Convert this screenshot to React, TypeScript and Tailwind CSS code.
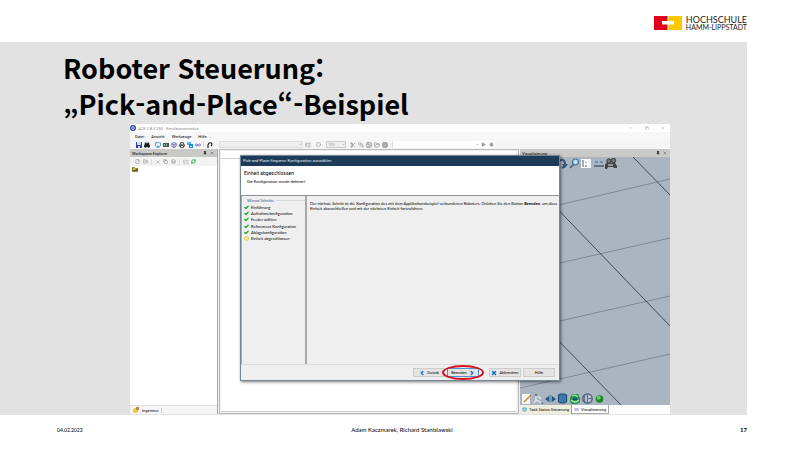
import type { ReactNode } from "react";
import {
  Binoculars, Box, Check, ChevronLeft, ChevronRight, Circle, Copy, Cpu, Cylinder, FolderOpen,
  Image, Layers, ListTree, Minus, Monitor, Pin, Play, Printer, RefreshCw,
  Scissors, X, File, Ruler, Bug, ChevronDown, Infinity as Loop,
} from "lucide-react";

const ui = "font-[Roboto,'Liberation_Sans',sans-serif]";

function Tool({ label, children }: { label: string; children: ReactNode }) {
  return (
    <button type="button" aria-label={label} className="flex size-[7px] shrink-0 items-center justify-center">
      {children}
    </button>
  );
}

function Logo() {
  return (
    <div className="flex items-center gap-1">
      <svg viewBox="0 0 28 14" className="h-[14px] w-[28px]" aria-hidden="true">
        <path d="M0 0H13.500V5H8V8.500H13.500V14H0Z" fill="#e2001a" />
        <path d="M14.500 0H28V14H14.500V8.500H20V5H14.500Z" fill="#fcc800" />
      </svg>
      <div className="font-[Lato,sans-serif] text-[#222]">
        <div className="text-[9px] leading-[9px]">HOCHSCHULE</div>
        <div className="text-[7px] leading-[7px]">HAMM-LIPPSTADT</div>
      </div>
    </div>
  );
}

function WindowBar() {
  return (
    <div className="flex h-2 items-center gap-[2px] pr-1 text-[#888]">
      <svg viewBox="0 0 6 6" className="size-[6px]" aria-hidden="true">
        <circle cx="3" cy="3" r="3" fill="#324b98" />
        <circle cx="3" cy="3" r="1.300" fill="none" stroke="#dce6ff" strokeWidth=".8" />
      </svg>
      <span className="flex-1">ACE 3.8.3.250 - Emulationsmodus</span>
      <div className="flex gap-[9px]">
        <Tool label="Minimieren"><Minus size={4} /></Tool>
        <Tool label="Wiederherstellen"><Copy size={4} /></Tool>
        <Tool label="Schließen"><X size={4} /></Tool>
      </div>
    </div>
  );
}

function MenuBar() {
  return (
    <nav className="flex h-2 items-center gap-[7px] bg-[#f7f7f7] px-[5px] text-black">
      {["Datei", "Ansicht", "Werkzeuge", "Hilfe"].map((m) => (
        <button type="button" key={m}>{m}</button>
      ))}
    </nav>
  );
}

function Toolbar() {
  return (
    <div className="flex h-[9px] items-center bg-[#f5f5f5] pl-[5px] text-[#9b9b9b]">
      <div className="flex w-[84px] shrink-0 items-center gap-[1px]">
        <Tool label="Speichern">
          <svg viewBox="0 0 6 6" className="size-[6px]" aria-hidden="true"><path d="M0 0H6V6H0Z" fill="#343c9c" /><path d="M1 0H5V3H1ZM2 4H4V6H2Z" fill="#d5d9f3" /></svg>
        </Tool>
        <Tool label="Suchen"><Binoculars size={6} strokeWidth={3} color="#111" fill="#222" /></Tool>
        <span className="w-[2px]" />
        <Tool label="Netzwerk"><Monitor size={6} strokeWidth={3} color="#448bb8" /></Tool>
        <Tool label="Steuerung">
          <svg viewBox="0 0 6 6" className="size-[6px]" aria-hidden="true"><path d="M0 1H6V5H0Z" fill="#4b5a58" /><path d="M1 2H2V4H1ZM3 2H4V4H3Z" fill="#a4b9ae" /></svg>
        </Tool>
        <Tool label="Objekt"><Box size={6} strokeWidth={3} color="#4550a0" /></Tool>
        <Tool label="Drucken"><Printer size={6} strokeWidth={3} color="#333" /></Tool>
        <Tool label="Fenster">
          <svg viewBox="0 0 6 6" className="size-[6px]" aria-hidden="true"><path d="M0 0H4V3H0Z" fill="#55baf0" /><path d="M2 2H6V6H2Z" fill="#188acf" /><path d="M3 4H5V5H3Z" fill="#d9f2ff" /></svg>
        </Tool>
        <Tool label="3D"><Loop size={6} strokeWidth={3} color="#5555d0" /></Tool>
        <span className="mx-[1px] h-[7px] w-px bg-[#ddd]" />
        <Tool label="Zurücksetzen">
          <svg viewBox="0 0 6 6" className="size-[6px]" aria-hidden="true"><path d="M1 6V3Q2 0 4 1Q6 2 4 4" fill="none" stroke="#222" strokeWidth="1.200" /></svg>
        </Tool>
      </div>
      <label className="flex h-[7px] w-[84px] shrink-0 items-center bg-[#eee]">
        <select aria-label="Modul" className="h-[7px] w-full appearance-none border border-[#ddd] bg-[#eee]" />
        <ChevronDown size={3} strokeWidth={5} className="-ml-1" />
      </label>
      <div className="flex items-center gap-[4px] pl-[1px]">
        <Tool label="Verbinden"><ListTree size={6} strokeWidth={3} /></Tool>
        <Tool label="Zustand"><Circle size={5} strokeWidth={3} /></Tool>
        <label className="flex items-center">
          <select aria-label="Zoom" className={`h-[7px] w-5 appearance-none border border-[#ccc] bg-[#eee] pl-px text-[4px] leading-[5px] ${ui}`}>
            <option>100</option>
          </select>
          <ChevronDown size={3} strokeWidth={5} className="-ml-1" />
        </label>
        <div className="flex gap-[1px]">
          <Tool label="Gehe zu"><Scissors size={6} strokeWidth={3} /></Tool>
          <Tool label="Maßstab"><Ruler size={6} strokeWidth={3} /></Tool>
          <Tool label="Bild"><Image size={6} strokeWidth={4} /></Tool>
          <Tool label="Ordner"><FolderOpen size={6} strokeWidth={3} /></Tool>
          <Tool label="Raster"><Cpu size={6} strokeWidth={4} /></Tool>
        </div>
      </div>
      <div className="ml-1 flex h-[7px] w-[87px] items-center justify-end border-l border-[#ddd] bg-white">
        <ChevronDown size={3} strokeWidth={5} />
      </div>
      <div className="flex gap-[1px] bg-white pl-px">
        <Tool label="Starten"><Play size={5} fill="#999" /></Tool>
        <Tool label="Debuggen"><Bug size={5} fill="#999" /></Tool>
      </div>
    </div>
  );
}

function PanelTitle({ children }: { children: ReactNode }) {
  return (
    <div className="flex h-2 items-center justify-between bg-[#c9c9c7] px-[2px] text-black">
      <span>{children}</span>
      <div className="flex">
        <Tool label="Anheften"><Pin size={4} fill="#222" color="#222" /></Tool>
        <Tool label="Schließen"><X size={4} color="#222" /></Tool>
      </div>
    </div>
  );
}

function Explorer() {
  return (
    <section className="flex w-[88px] shrink-0 flex-col border-r border-[#aaa] bg-white">
      <PanelTitle>Workspace Explorer</PanelTitle>
      <div className="flex h-[9px] items-center gap-[1px] bg-[#f3f3f3] pl-1 text-[#999]">
        <Tool label="Neu"><File size={5} strokeWidth={3} /></Tool>
        <Tool label="Öffnen"><FolderOpen size={5} strokeWidth={3} /></Tool>
        <span className="mx-px h-[6px] w-px bg-[#ddd]" />
        <Tool label="Löschen"><X size={6} /></Tool>
        <Tool label="Kopieren"><Copy size={5} strokeWidth={3} /></Tool>
        <Tool label="Einfügen"><Layers size={5} strokeWidth={3} /></Tool>
        <span className="mx-px h-[6px] w-px bg-[#ddd]" />
        <Tool label="Struktur"><ListTree size={6} /></Tool>
        <Tool label="Aktualisieren"><RefreshCw size={5} color="#37ad48" strokeWidth={4} /></Tool>
      </div>
      <div className="flex-1 pt-px pl-[2px]">
        <svg viewBox="0 0 7 5" className="h-[5px] w-[6px]" aria-hidden="true">
          <path d="M0 0H3L4 1H7V5H0Z" fill="#685e16" />
          <path d="M1 1H4V3H1Z" fill="#e8dd47" />
        </svg>
      </div>
      <div className="flex h-[9px] items-center gap-[3px] border-t border-[#ddd] bg-[#f5f5f5] pl-[3px] text-black">
        <svg viewBox="0 0 6 6" className="size-[6px]" aria-hidden="true">
          <circle cx="2.500" cy="3.500" r="2.500" fill="#f3c82c" />
          <path d="M3 0H6V3H3Z" fill="#b18b55" />
        </svg>
        <button type="button" className="border-r border-[#ccc] pr-[2px]">Ingenieur</button>
      </div>
    </section>
  );
}

function Visualization() {
  return (
    <section className="flex w-[150px] shrink-0 flex-col">
      <PanelTitle>Visualisierung</PanelTitle>
      <div className="relative flex-1 bg-[#abb5c2]">
        <svg viewBox="0 0 150 248" preserveAspectRatio="none" className="absolute inset-0 size-full" aria-hidden="true">
          <g stroke="#737e8a" strokeWidth=".8">
            <path d="M0 57L150 22M0 115L150 81M0 173L150 139M0 231L150 197" />
          </g>
          <g stroke="#27313b" strokeWidth=".8">
            <path d="M113 0L150 38M0 13L150 169M0 144L101 248" />
          </g>
        </svg>
        <div className="relative flex h-full flex-col justify-between">
          <div className="flex items-center gap-px pt-px pl-[37px]">
            <button type="button" aria-label="Drehen">
              <svg viewBox="0 0 11 11" className="size-[11px]" aria-hidden="true"><path d="M1 4Q6 -1 8 5Q9 8 5 10" fill="none" stroke="#34566f" strokeWidth="2" /><path d="M5 6H11L8 10Z" fill="#34566f" /></svg>
            </button>
            <button type="button" aria-label="Zoomen">
              <svg viewBox="0 0 11 11" className="size-[11px]" aria-hidden="true"><path d="M5 6L1 10" stroke="#42617b" strokeWidth="1.600" /><circle cx="6.500" cy="4" r="3" fill="#c4dcea" stroke="#3f6f9b" strokeWidth="1.200" /></svg>
            </button>
            <button type="button" aria-label="Ansicht" className="h-[9px] w-[10px] bg-white">
              <svg viewBox="0 0 10 9" aria-hidden="true"><path d="M2 1V8M5 3V4M5 6V8" stroke="#555" /><path d="M7 0H10V9H7Z" fill="#f0f4f7" /></svg>
            </button>
            <span className="w-px" />
            <button type="button" aria-label="Messen">
              <svg viewBox="0 0 10 10" className="size-[10px]" aria-hidden="true"><path d="M1 3H4M6 3H9" stroke="#2c71a2" /><path d="M0 6H10V8H0Z" fill="#65747c" /></svg>
            </button>
            <button type="button" aria-label="Aufnehmen">
              <svg viewBox="0 0 12 11" className="h-[11px] w-[12px]" aria-hidden="true"><circle cx="4" cy="3" r="2.200" fill="#76797b" stroke="#333" /><circle cx="8.500" cy="2.500" r="2.200" fill="#76797b" stroke="#333" /><path d="M1 5H10L12 8V10H9L8 9H3L2 11H0V7Z" fill="#444" /><path d="M3 6H8V8H3Z" fill="#999" /></svg>
            </button>
          </div>
          <div className="flex items-center gap-px pb-px pl-[2px]">
            <button type="button" aria-label="Bearbeiten">
              <svg viewBox="0 0 10 10" className="size-[10px]" aria-hidden="true"><path d="M0 0H8V10H0Z" fill="#f8f8f4" /><path d="M2 8L9 1" stroke="#c28d30" strokeWidth="1.500" /></svg>
            </button>
            <button type="button" aria-label="Achsen">
              <svg viewBox="0 0 11 10" className="h-[10px] w-[11px]" aria-hidden="true"><path d="M3 1V6L9 9M3 6L1 9M5 2L8 5" fill="none" stroke="#e5eaf0" strokeWidth="1.300" /><path d="M2 2L3 0L4 2M8 10H10L9 8" stroke="#526779" fill="none" /></svg>
            </button>
            <button type="button" aria-label="Verschieben">
              <svg viewBox="0 0 11 9" className="h-[9px] w-[11px]" aria-hidden="true"><path d="M0 5L4 2V4H7V2L11 5L7 8V6H4V8Z" fill="#245783" /><path d="M4 1H7V8H4Z" fill="#7697ae" /></svg>
            </button>
            <button type="button" aria-label="Zylinder"><Cylinder size={11} color="#123c60" fill="#3b79a7" /></button>
            <button type="button" aria-label="Wiederholen">
              <svg viewBox="0 0 12 11" className="h-[11px] w-[12px]" aria-hidden="true"><path d="M3 1H9L11 5V9L8 11H3L1 9V5Z" fill="#23934b" /><path d="M3 3Q6 1 9 4M2 7Q6 11 10 7" fill="none" stroke="#a8dfb2" strokeWidth="1.200" /><path d="M4 5H8V7H4Z" fill="#204d6c" /></svg>
            </button>
            <button type="button" aria-label="Welt">
              <svg viewBox="0 0 11 11" className="size-[11px]" aria-hidden="true"><circle cx="5.500" cy="5.500" r="4.700" fill="#b7c1d2" stroke="#465a78" strokeWidth="1.300" /><path d="M5.500 1V10M5.500 5.500H10M3 2Q1.500 5.500 3 9" fill="none" stroke="#5d6e89" /></svg>
            </button>
            <button type="button" aria-label="Status">
              <svg viewBox="0 0 10 10" className="size-[10px]" aria-hidden="true"><circle cx="5.500" cy="5" r="3.800" fill="#17852b" /><circle cx="4.700" cy="3.800" r="2" fill="#61d05c" /></svg>
            </button>
          </div>
        </div>
      </div>
      <div className="flex h-[9px] bg-white text-black">
        <button type="button" className="flex items-center gap-[2px] border-r border-[#999] bg-[#efefdd] px-[2px]"><Layers size={5} color="#268dc3" fill="#8bcdea" />Task Status Steuerung</button>
        <button type="button" className="flex items-center gap-[2px] border-r border-b border-[#aaa] px-[2px]"><span className="text-[#5540c0]">3D</span>Visualisierung</button>
      </div>
    </section>
  );
}

const steps = ["Einführung", "Aufnahmekonfiguration", "Feeder wählen", "Refinement Konfiguration", "Ablagekonfiguration", "Einheit abgeschlossen"];

function DialogButton({ focused = false, children }: { focused?: boolean; children: ReactNode }) {
  return (
    <button type="button" className={`flex h-[9px] w-8 items-center justify-center gap-[2px] border bg-[#e4e4e4] ${focused ? "border-[#4a93cf]" : "border-[#ccc]"}`}>
      {children}
    </button>
  );
}

function WizardDialog() {
  return (
    <div role="dialog" aria-label="Konfiguration auswählen" className="absolute top-[6px] right-[110px] bottom-[33px] left-[110px] flex flex-col border border-[#718795] bg-[#efefef] text-black shadow-[1px_1px_3px_#0008]">
      <div className="h-[10px] bg-[#1b3b59] pl-[2px] leading-[10px] text-[#e4ebf1]">Pick-and-Place Sequenz: Konfiguration auswählen</div>
      <div className="h-[30px] border-b border-[#8b9298] bg-white pt-1 pl-[3px]">
        <h2 className="text-[5px] leading-[6px]">Einheit abgeschlossen</h2>
        <p className="pt-[3px] pl-[3px]">Die Konfiguration wurde definiert</p>
      </div>
      <div className="flex flex-1 border-b border-[#ddd] font-[Lato,sans-serif]">
        <div className="w-[66px] shrink-0 border-r-2 border-l border-[#aaa] pt-[2px] pl-[2px]">
          <div className="flex items-center gap-[2px] pl-[3px] text-[#2854a4]">Wizard Schritte<span className="h-px flex-1 bg-[#d2d7dc]" /></div>
          <ol className="flex h-[39px] flex-col justify-between pt-px">
            {steps.map((s, i) => (
              <li key={s} className="flex h-[6px] items-center gap-[2px]">
                {i < 5 ? <Check size={5} color="#16a729" strokeWidth={6} /> : <Circle size={5} color="#d8b32e" fill="#ffe778" />}
                {s}
              </li>
            ))}
          </ol>
        </div>
        <p className="flex-1 pt-[5px] pl-[3px]">
          Der nächste Schritt ist die Konfiguration des mit dem Applikationsbeispiel verbundenen Roboters. Drücken Sie den Button <b>Beenden</b>, um diese Einheit abzuschließen und mit der nächsten Einheit fortzufahren.
        </p>
      </div>
      <div className="flex h-[15px] items-center justify-end pr-1">
        <DialogButton><ChevronLeft size={6} color="#1473c8" strokeWidth={6} />Zurück</DialogButton>
        <div className="relative mr-[10px] ml-[2px]">
          <DialogButton focused>Beenden<ChevronRight size={6} color="#1473c8" strokeWidth={6} /></DialogButton>
          <span className="absolute -inset-x-[5px] -inset-y-[3px] rounded-[50%] border-2 border-[#d6101f]" />
        </div>
        <DialogButton><X size={6} color="#1473c8" strokeWidth={6} />Abbrechen</DialogButton>
        <span className="w-[2px]" />
        <DialogButton>Hilfe</DialogButton>
      </div>
    </div>
  );
}

export default function App() {
  return (
    <div className="min-h-screen bg-white">
      <header className="flex h-[42px] items-center justify-end pt-1 pr-[53px]"><Logo /></header>
      <main className="mr-[53px] bg-[#e2e2e2] pt-2 pb-px">
        <h1 lang="ko" className="pb-[2px] pl-[63px] font-['Noto_Sans_CJK_KR',sans-serif] text-[27px] leading-[36px] font-bold text-black">
          Roboter Steuerung:<br />„Pick-and-Place“-Beispiel
        </h1>
        <div className={`mr-[77px] ml-[130px] flex flex-col bg-white text-[4px] leading-[5px] ${ui}`}>
          <WindowBar />
          <MenuBar />
          <Toolbar />
          <div className="relative flex h-[265px] bg-[#efefef]">
            <Explorer />
            <section className="mx-px flex flex-1 flex-col border border-[#b9b9b9] bg-[#f1f1f1] p-px pr-[2px]">
              <div className="h-2 border-b border-[#ccc] bg-white" />
              <div className="flex-1 border-b border-[#ccc] bg-white" />
            </section>
            <Visualization />
            <WizardDialog />
          </div>
        </div>
      </main>
      <footer className="grid grid-cols-[1fr_auto_1fr] pt-[11px] pr-[53px] pl-[57px] font-[Lato,sans-serif] text-[5px] leading-[8px] text-black">
        <span>04.02.2023</span>
        <span className="text-[6px]">Adam Kaczmarek, Richard Stanislawski</span>
        <span className="text-right text-[6px] font-bold">17</span>
      </footer>
    </div>
  );
}
